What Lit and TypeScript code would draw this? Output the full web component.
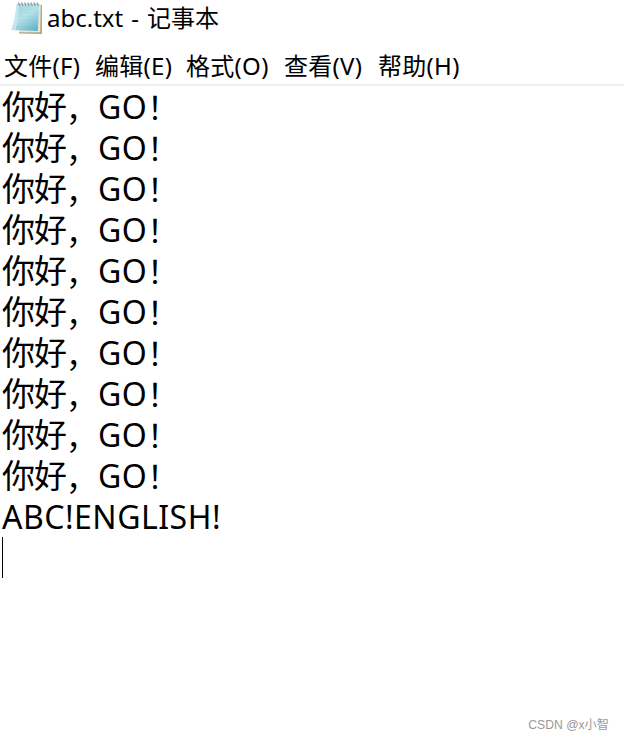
import { LitElement, html, css, svg } from "lit";
import { customElement } from "lit/decorators.js";

const MENUS: [string, string, string][] = [
  ["文件", "(F)", "file"],
  ["编辑", "(E)", "edit"],
  ["格式", "(O)", "format"],
  ["查看", "(V)", "view"],
  ["帮助", "(H)", "help"],
];
const GREETINGS = Array.from({ length: 10 });

@customElement("notepad-icon")
export class NotepadIcon extends LitElement {
  static styles = css`
    :host { display: block; width: 34px; height: 35px; }
    svg { display: block; }
  `;
  render() {
    const rings = [0, 1, 2, 3, 4, 5, 6].map(
      (i) => svg`<path d=${`M${8.6 + i * 3.1} 3l1.1 2.2`} stroke="#87959a" stroke-width="1.3" stroke-linecap="round"/>`
    );
    return html`<svg width="34" height="35" viewBox="0 0 34 35" fill="none">
      <defs>
        <linearGradient id="page" x1="8" y1="4" x2="24" y2="31" gradientUnits="userSpaceOnUse">
          <stop offset="0" stop-color="#a5d5df" />
          <stop offset=".45" stop-color="#b5e2ea" />
          <stop offset="1" stop-color="#62b4c8" />
        </linearGradient>
      </defs>
      <path d="M28 4.5L32 5V34L9 33.4V30z" fill="#b0a78a" />
      <path d="M28 4L30.8 4.5L30.2 32.2L9 32.2V30z" fill="#eee5cc" />
      <path d="M6.8 4H29.3L27.8 31L1.2 30Q5 20 6.8 4z" fill="url(#page)" />
      <path d="M6.8 4Q5 20 1.2 30L5.5 30.2Q8 20 9 5z" fill="#d3edf1" opacity=".65" />
      <path d="M9 9.5H27.5M8.5 13H27.3M8 16.5H27.1M7.4 20H26.9M6.8 23.5H26.7M6 27H26.5" stroke="#7fbdcb" stroke-width=".6" opacity=".2" />
      <path d="M7 4.8H29" stroke="#c5dade" stroke-width="1.2" />
      ${rings}
    </svg>`;
  }
}

@customElement("app-root")
export class AppRoot extends LitElement {
  static styles = css`
    :host {
      display: flex;
      flex-direction: column;
      width: 624px;
      height: 740px;
      overflow: hidden;
      position: relative;
      background: #fff;
      color: #000;
      font-family: "Noto Sans", "Noto Sans CJK SC", sans-serif;
    }
    .titlebar {
      display: flex;
      height: 37px;
      padding-left: 10px;
      font-size: 24px;
      line-height: 36px;
      white-space: nowrap;
    }
    .title { margin-left: 3px; word-spacing: 1.8px; }
    .cjk { font-family: "Noto Sans CJK SC", sans-serif; line-height: 1; }
    .menubar {
      display: flex;
      height: 49px;
      padding-left: 4px;
      border-bottom: 2px solid #f0f0f0;
      box-sizing: border-box;
      font-size: 24px;
      line-height: 57px;
      letter-spacing: 0.3px;
      white-space: nowrap;
    }
    .file { width: 91px; }
    .edit { width: 91px; }
    .format { width: 98px; }
    .view { width: 94px; }
    .editor { padding-left: 2px; font-size: 32px; }
    .line { height: 41px; line-height: 41px; white-space: nowrap; letter-spacing: 0.5px; }
    .line .cjk { font-size: 33px; letter-spacing: -1px; }
    .line .mark { font-size: 31px; letter-spacing: 1px; }
    .line .comma { vertical-align: -2px; }
    .caret { width: 1px; height: 41px; background: #000; }
    .watermark {
      position: absolute;
      right: 15px;
      bottom: 5px;
      font: 12.2px/20px "Liberation Sans", "Noto Sans CJK SC", sans-serif;
      color: #999;
    }
  `;
  render() {
    return html`
      <header class="titlebar">
        <notepad-icon></notepad-icon>
        <div class="title">abc.txt - <span class="cjk">记事本</span></div>
      </header>
      <nav class="menubar">
        ${MENUS.map(([name, key, id]) => html`<div class=${id}><span class="cjk">${name}</span>${key}</div>`)}
      </nav>
      <main class="editor">
        ${GREETINGS.map(() => html`<div class="line"><span class="cjk">你好</span><span class="cjk mark comma">，</span>GO<span class="cjk mark">！</span></div>`)}
        <div class="line">ABC!ENGLISH!</div>
        <div class="caret"></div>
      </main>
      <div class="watermark">CSDN @x小智</div>
    `;
  }
}
